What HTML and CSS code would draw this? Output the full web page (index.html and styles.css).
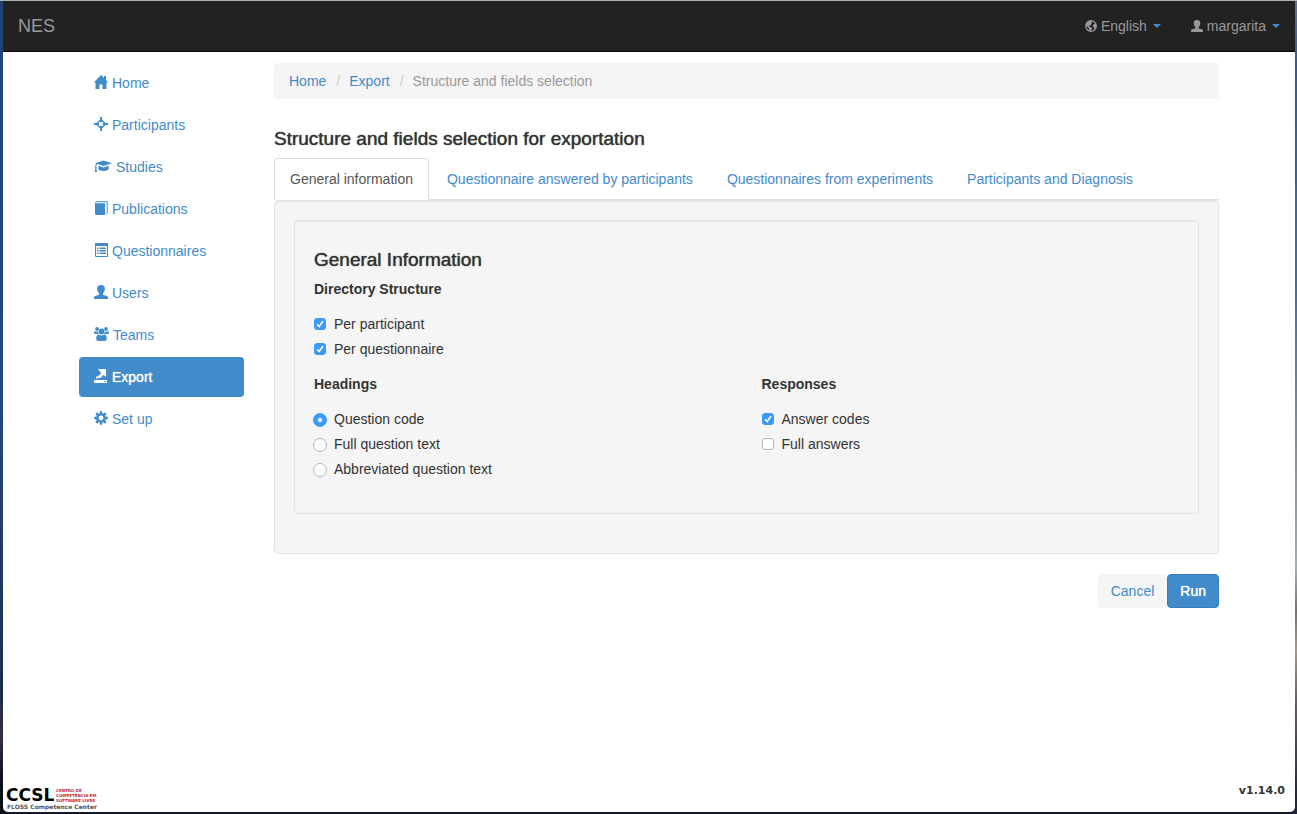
FILE: index.html
```
<!DOCTYPE html>
<html lang="en">
<head>
<meta charset="utf-8">
<title>NES - Structure and fields selection</title>
<link rel="stylesheet" href="styles.css">
</head>
<body>
<div class="window">
  <header class="navbar">
    <a class="brand" href="#">NES</a>
    <nav class="nav-right" aria-label="Account">
      <a href="#"><svg class="icon-sm" viewBox="0 0 12 12"><circle cx="6" cy="6" r="5.300" fill="none" stroke="currentColor" stroke-width="1.200"/><path fill="currentColor" d="M1 4 4 1h2.600l1 .8-1.400 1 .7 1L5.200 5.600 4 5.400l.6 1.400 1.800.6 1 1.200-1.200 1.200L5.600 11 4 10.500 4.200 8.500 2.600 6.700 1 6zM8 5l1.500-1.200 1.800.8v2L10 9.200 9 8.500 9 7 7.700 6.500z"/></svg><span>English</span><span class="caret"></span></a>
      <a href="#"><svg class="icon-sm" viewBox="0 0 14 14"><use href="#person"/></svg><span>margarita</span><span class="caret"></span></a>
    </nav>
  </header>

  <svg class="sprite" aria-hidden="true">
    <symbol id="person" viewBox="0 0 14 14"><path fill="currentColor" d="M7 0c2.500 0 3.900 1.400 3.900 3.500 0 1.900-.7 3.700-1.900 4.500v1.200c0 .6.500.8 1.300 1l2.500.7c.8.300 1.200.8 1.200 1.500V14H0v-1.600c0-.7.400-1.200 1.200-1.500l2.500-.7c.8-.2 1.300-.4 1.300-1V8C3.800 7.200 3.100 5.400 3.100 3.500 3.100 1.400 4.500 0 7 0z"/></symbol>
  </svg>

  <div class="container">
    <nav class="sidebar" aria-label="Main">
      <a href="#"><svg class="icon" viewBox="0 0 14 14"><path fill="currentColor" d="M7 0l3 3V1h2v4l2.200 2.500h-1.700V14H8.500V9.500h-3V14H1.500V7.500H-.2z"/></svg><span>Home</span></a>
      <a href="#"><svg class="icon" viewBox="0 0 14 14"><path fill="none" stroke="currentColor" stroke-width="1.300" d="M7 2.300 11.700 7 7 11.700 2.300 7z"/><path fill="currentColor" d="M6 0h2v5.200H6zM6 8.800h2V14H6zM0 6h5.200v2H0zM8.800 6H14v2H8.800z"/></svg><span>Participants</span></a>
      <a href="#"><svg class="icon-wide" viewBox="0 0 18 14"><path fill="currentColor" d="M9.500 1.500 18 4.200 9.500 7 3.500 5.100C2.500 5.600 2.400 6.500 2.300 7.800c.6.400.5 1.200 0 1.500L3 13H.7l.6-3.700c-.5-.4-.5-1.200.1-1.500 0-1.300.2-2.300.9-3L1 4.200zM4.500 6.800l5 1.600 5-1.600.2 3c0 1.300-2.300 2.200-5.200 2.200s-5.200-.9-5.200-2.200z"/></svg><span>Studies</span></a>
      <a href="#"><svg class="icon" viewBox="0 0 14 14"><path fill="currentColor" d="M1 2.200h10V14H2.300C1.500 14 1 13.500 1 12.800z"/><path fill="none" stroke="currentColor" d="M1.200 2.400 2.500.7h10.700v11.500L12.200 13"/></svg><span>Publications</span></a>
      <a href="#"><svg class="icon" viewBox="0 0 14 14"><path fill="none" stroke="currentColor" d="M1.500.5h12v13h-12z"/><path fill="currentColor" d="M1 0h13v3H1zM3 4.500h1.500V6H3zm2.500 0H12V6H5.500zM3 7h1.500v1.500H3zm2.500 0H12v1.500H5.500zM3 9.500h1.500V11H3zm2.500 0H12V11H5.500z"/></svg><span>Questionnaires</span></a>
      <a href="#"><svg class="icon" viewBox="0 0 14 14"><use href="#person"/></svg><span>Users</span></a>
      <a href="#"><svg class="icon-team" viewBox="0 0 15 14"><g fill="currentColor"><circle cx="3" cy="2" r="1.900"/><circle cx="12" cy="2" r="1.900"/><circle cx="7.500" cy="4.500" r="2.900"/><path d="M.9 4.200c1.200.7 2.200.7 3.100.4.100 1 .4 1.800 1 2.400H1.400C.4 7 0 6.500 0 5.700 0 5 .3 4.200.9 4.200zM14.100 4.200c-1.200.7-2.200.7-3.100.4-.1 1-.4 1.800-1 2.400h3.600c1 0 1.400-.5 1.400-1.300 0-.7-.3-1.500-.9-1.500zM4.700 7.400c1.800 1.300 3.800 1.300 5.600 0 1.600 0 2.500 1.800 2.500 4.200 0 1.500-.9 2.400-2.200 2.400H4.400c-1.300 0-2.200-.9-2.200-2.400 0-2.400.9-4.200 2.500-4.200z"/></g></svg><span>Teams</span></a>
      <a class="active" href="#" aria-current="page"><svg class="icon" viewBox="0 0 14 14"><path fill="currentColor" d="M0 11h13v3H0zM4 0h8v8L9.700 5.700 6.500 9H3.800V7.500L6.300 5l1-.8zM2.200 7.200h1.400v2.600H2.200z"/><path stroke="#428bca" stroke-width=".8" d="M10 12.500h2"/></svg><span>Export</span></a>
      <a href="#"><svg class="icon" viewBox="0 0 14 14"><circle cx="7" cy="7" r="3.700" fill="none" stroke="currentColor" stroke-width="2.600"/><path stroke="currentColor" stroke-width="2.400" d="M7 .2v2.300M7 11.500v2.300M.2 7h2.300M11.500 7h2.300M2.200 2.200l1.600 1.600M10.200 10.200l1.600 1.600M2.200 11.800l1.600-1.600M10.200 3.800l1.600-1.600"/></svg><span>Set up</span></a>
    </nav>

    <main class="content">
      <nav class="breadcrumb" aria-label="Breadcrumb">
        <a href="#">Home</a><span class="sep">/</span><a href="#">Export</a><span class="sep">/</span><span class="current">Structure and fields selection</span>
      </nav>
      <h1 class="title">Structure and fields selection for exportation</h1>
      <nav class="tabs" aria-label="Sections">
        <a class="active" href="#">General information</a>
        <a href="#">Questionnaire answered by participants</a>
        <a href="#">Questionnaires from experiments</a>
        <a href="#">Participants and Diagnosis</a>
      </nav>
      <form>
        <div class="well">
          <div class="well inner">
            <h2 class="title">General Information</h2>
            <fieldset>
              <legend>Directory Structure</legend>
              <label><input type="checkbox" checked>Per participant</label>
              <label><input type="checkbox" checked>Per questionnaire</label>
            </fieldset>
            <div class="columns">
              <fieldset>
                <legend>Headings</legend>
                <label><input type="radio" name="headings" checked>Question code</label>
                <label><input type="radio" name="headings">Full question text</label>
                <label><input type="radio" name="headings">Abbreviated question text</label>
              </fieldset>
              <fieldset>
                <legend>Responses</legend>
                <label><input type="checkbox" checked>Answer codes</label>
                <label><input type="checkbox">Full answers</label>
              </fieldset>
            </div>
          </div>
        </div>
        <div class="actions">
          <button type="button" class="btn">Cancel</button>
          <button type="button" class="btn primary">Run</button>
        </div>
      </form>
    </main>
  </div>

  <footer class="footer">
    <svg class="logo" viewBox="0 0 92 26" role="img" aria-label="CCSL FLOSS Competence Center">
      <text class="logo-main" x="0" y="16">CCSL</text>
      <g class="logo-side">
        <text x="50" y="7">CENTRO DE</text>
        <text x="50" y="12">COMPETÊNCIA EM</text>
        <text x="50" y="17">SOFTWARE LIVRE</text>
      </g>
      <text class="logo-sub" x="1" y="24">FLOSS Competence Center</text>
    </svg>
    <span class="version">v1.14.0</span>
  </footer>
</div>
</body>
</html>
```

FILE: styles.css
```
* {
  box-sizing: border-box;
}

body {
  margin: 0;
  min-height: 100vh;
  padding: 1px 2px 2px 3px;
  display: flex;
  font: 14px/20px "Liberation Sans", Arial, sans-serif;
  color: #333;
  background:
    linear-gradient(#b0b0b0, #b0b0b0) top / 100% 1px no-repeat,
    linear-gradient(#1f4475 0, #24497a 50%, #1c2d4d 85%, #3a2c40 91%, #0a0f1c 96%) left / 5px 100% no-repeat,
    linear-gradient(#5f7396 0, #2f5c96 8%, #3f6fa3 35%, #8b9298 57%, #9fb0b5 70%, #77706f 75%, #a8997f 80%, #6a5f68 86%, #20283c 98%) right / 5px 100% no-repeat,
    #111827;
}

a {
  color: #428bca;
  text-decoration: none;
}

.window {
  flex: 1;
  min-width: 0;
  display: flex;
  flex-direction: column;
  background: #fff;
  border-radius: 0 0 5px 5px;
}

.navbar {
  display: flex;
  justify-content: space-between;
  align-items: center;
  height: 51px;
  padding: 0 15px;
  background: #222;
  border-bottom: 1px solid #080808;
}

.navbar a {
  color: #999;
}

.brand {
  font-size: 18px;
}

.nav-right {
  display: flex;
  gap: 30px;
}

.nav-right a {
  display: flex;
  align-items: center;
  gap: 4px;
}

.icon-sm {
  width: 12px;
  height: 12px;
}

.caret {
  margin-left: 2px;
  border: 4px solid transparent;
  border-top-color: #428bca;
  border-bottom: 0;
}

.sprite {
  display: none;
}

.container {
  flex: 1;
  display: flex;
  gap: 30px;
  width: 100%;
  max-width: 1170px;
  margin: 0 auto;
  padding: 11px 15px;
}

.sidebar {
  flex: 0 0 165px;
  display: flex;
  flex-direction: column;
  gap: 2px;
}

.sidebar a {
  display: flex;
  align-items: center;
  gap: 4px;
  height: 40px;
  padding: 0 15px;
  border-radius: 4px;
}

.sidebar svg {
  height: 14px;
  margin-bottom: 2px;
}

.sidebar .active {
  color: #fff;
  background: #428bca;
  text-shadow: 0 0 1px #fff;
}

.icon {
  width: 14px;
}

.icon-wide {
  width: 18px;
}

.icon-team {
  width: 15px;
}

.content {
  flex: 1;
  min-width: 0;
}

.breadcrumb {
  padding: 8px 15px;
  margin-bottom: 30px;
  background: #f5f5f5;
  border-radius: 4px;
}

.breadcrumb .sep {
  padding: 0 9px 0 10px;
  color: #ccc;
}

.breadcrumb .current {
  color: #999;
}

.title {
  margin: 0 0 9px;
  font-size: 19px;
  line-height: 20px;
  font-weight: 400;
  text-shadow: 0 0 1px #333;
}

.tabs {
  display: flex;
  gap: 2px;
  border-bottom: 1px solid #ddd;
}

.tabs a {
  margin-bottom: -1px;
  padding: 10px 15px;
  border: 1px solid transparent;
  border-radius: 4px 4px 0 0;
}

.tabs .active {
  color: #555;
  background: #fff;
  border-color: #ddd;
  border-bottom-color: #fff;
}

.well {
  padding: 19px;
  background: #f5f5f5;
  border: 1px solid #e3e3e3;
  border-radius: 4px;
  box-shadow: inset 0 1px 1px rgba(0, 0, 0, 0.05);
}

.inner {
  margin-bottom: 20px;
  padding: 29px 19px 19px;
}

form fieldset {
  margin: 0;
  padding: 0 0 15px;
  border: 0;
}

form legend {
  padding: 0;
  margin-bottom: 15px;
  font-weight: 700;
}

form label {
  display: flex;
  align-items: center;
  gap: 8px;
  width: fit-content;
}

form label + label {
  margin-top: 5px;
}

form input {
  appearance: none;
  flex: none;
  width: 12px;
  height: 12px;
  margin: 0;
  background: #fff center no-repeat;
  border: 1px solid #b4b4b4;
  border-radius: 3px;
}

form input[type="checkbox"]:checked {
  border-color: #3b99fc;
  background-color: #3b99fc;
  background-image: url("data:image/svg+xml,%3Csvg xmlns='http://www.w3.org/2000/svg' width='10' height='10' viewBox='0 0 10 10'%3E%3Cpath fill='none' stroke='white' stroke-width='1.5' d='M2 5.300 4.200 7.600 8 2'/%3E%3C/svg%3E");
}

form input[type="radio"] {
  width: 14px;
  height: 14px;
  margin: 2px -1px 0;
  border-radius: 50%;
}

form input[type="radio"]:checked {
  border-color: #3b99fc;
  background: radial-gradient(circle, #fff 0 1px, #3b99fc 3px);
}

.columns {
  display: grid;
  grid-template-columns: 1fr 1fr;
  gap: 30px;
}

.actions {
  display: flex;
  justify-content: flex-end;
  margin-top: 20px;
}

.btn {
  padding: 6px 12px;
  font: inherit;
  color: #428bca;
  background: #f5f5f5;
  border: 1px solid #f5f5f5;
  border-radius: 4px;
}

.primary {
  color: #fff;
  background: #428bca;
  border-color: #357ebd;
  text-shadow: 0 0 1px #fff;
}

.footer {
  display: flex;
  justify-content: space-between;
  align-items: center;
  padding: 0 10px 1px 3px;
}

.logo {
  width: 92px;
  height: 26px;
}

.logo text {
  font-family: "DejaVu Sans", sans-serif;
  font-weight: 700;
}

.logo .logo-main {
  font-size: 17px;
}

.logo .logo-side {
  font-size: 4px;
  fill: #c4232b;
}

.logo .logo-sub {
  font-size: 6px;
  fill: #555;
}

.version {
  padding-bottom: 14px;
  font: 700 11px/12px "DejaVu Sans", sans-serif;
}
```
